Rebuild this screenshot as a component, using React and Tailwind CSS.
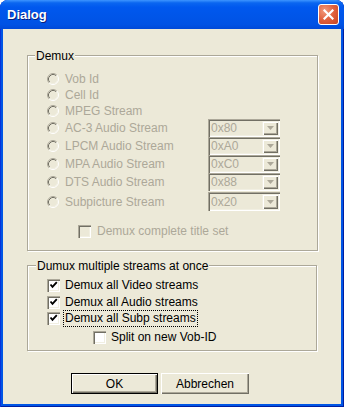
import React from "react";

function Radio() {
  return (
    <svg width="12" height="12" viewBox="0 0 12 12" className="shrink-0">
      <circle cx="6" cy="6" r="4.5" fill="#ece9d8" />
      <path d="M2.11 9.89 A5.5 5.5 0 0 1 9.89 2.11" fill="none" stroke="#aca899" />
      <path d="M9.89 2.11 A5.5 5.5 0 0 1 2.11 9.89" fill="none" stroke="#ffffff" />
      <path d="M2.82 9.18 A4.5 4.5 0 0 1 9.18 2.82" fill="none" stroke="#716f64" />
      <path d="M9.18 2.82 A4.5 4.5 0 0 1 2.82 9.18" fill="none" stroke="#f1efe2" />
    </svg>
  );
}

function Check({ checked, disabled }) {
  return (
    <div
      className={
        "w-[13px] h-[13px] shrink-0 shadow-[inset_1px_1px_0_#aca899,inset_2px_2px_0_#716f64,inset_-1px_-1px_0_#ffffff,inset_-2px_-2px_0_#f1efe2] " +
        (disabled ? "bg-[#ece9d8]" : "bg-white")
      }
    >
      {checked && (
        <svg width="13" height="13" viewBox="0 0 13 13">
          <path d="M3.5 5.5 L5.5 7.8 L9.8 3.2" fill="none" stroke="#000" strokeWidth="1.9" />
        </svg>
      )}
    </div>
  );
}

function Combo({ value, tall }) {
  return (
    <div
      className={
        "relative w-[72px] bg-[#ece9d8] shadow-[inset_1px_1px_0_#aca899,inset_2px_2px_0_#716f64,inset_-1px_-1px_0_#ffffff,inset_-2px_-2px_0_#f1efe2] flex items-center " +
        (tall ? "h-[19px]" : "h-[18px]")
      }
    >
      <span className="pl-[3px] text-[12px] leading-[14px] text-[#aca899]">{value}</span>
      <div className="absolute right-[2px] top-[2px] bottom-[2px] w-[16px] bg-[#ece9d8] shadow-[inset_1px_1px_0_#f1efe2,inset_2px_2px_0_#ffffff,inset_-1px_-1px_0_#716f64,inset_-2px_-2px_0_#aca899] flex items-center justify-center">
        <svg width="7" height="4" viewBox="0 0 7 4">
          <path d="M0 0 H7 L3.5 4 Z" fill="#aca899" />
        </svg>
      </div>
    </div>
  );
}

function RadioRow({ label, h, combo, tall, extra }) {
  return (
    <div className={"flex items-center " + h + " " + (extra || "")}>
      <div className="w-[161px] flex items-center gap-[6px]">
        <Radio />
        <span className="text-[12px] leading-[14px] text-[#aca899]">{label}</span>
      </div>
      {combo && <Combo value={combo} tall={tall} />}
    </div>
  );
}

export default function App() {
  return (
    <div className="w-[344px] h-[407px] flex flex-col bg-[#0055e5] rounded-t-[8px] overflow-hidden shadow-[inset_1px_0_0_#0831d9,inset_-1px_0_0_#001ea0,inset_0_-1px_0_#001ea0] font-['Liberation_Sans',Arial,sans-serif] select-none">
      <div className="h-[29px] shrink-0 flex items-center justify-between pl-[7px] pr-[5px] bg-[linear-gradient(to_bottom,#3d95ff_0%,#0a66f0_10%,#0058ee_25%,#0055e8_60%,#0052e4_85%,#0049d8_100%)]">
        <span className="text-white font-bold text-[13px] leading-[16px] [text-shadow:1px_1px_0_#0a1e7a]">Dialog</span>
        <div className="w-[21px] h-[21px] rounded-[3px] border border-white bg-[radial-gradient(circle_at_30%_30%,#f29a7c_0%,#e0603d_50%,#c74421_100%)] flex items-center justify-center">
          <svg width="11" height="11" viewBox="0 0 11 11">
            <path d="M1.5 1.5 L9.5 9.5 M9.5 1.5 L1.5 9.5" stroke="#fff" strokeWidth="2.2" strokeLinecap="square" />
          </svg>
        </div>
      </div>
      <div className="flex-1 mx-[3px] mb-[3px] bg-[#ece9d8] flex flex-col">
        <div className="relative mt-[26px] ml-[24px] w-[291px] h-[196px] border border-[#aca899] shadow-[inset_1px_1px_0_#ffffff,1px_1px_0_#ffffff] pt-[15px] pl-[19px] flex flex-col">
          <span className="absolute left-[7px] top-[-7px] px-[1px] bg-[#ece9d8] text-[12px] leading-[14px] text-black">Demux</span>
          <RadioRow label="Vob Id" h="h-[16px]" />
          <RadioRow label="Cell Id" h="h-[16px]" />
          <RadioRow label="MPEG Stream" h="h-[16px]" />
          <RadioRow label="AC-3 Audio Stream" h="h-[18px]" combo="0x80" />
          <RadioRow label="LPCM Audio Stream" h="h-[18px]" combo="0xA0" />
          <RadioRow label="MPA Audio Stream" h="h-[18px]" combo="0xC0" />
          <RadioRow label="DTS Audio Stream" h="h-[18px]" combo="0x88" />
          <RadioRow label="Subpicture Stream" h="h-[19px]" combo="0x20" tall extra="mt-[1px]" />
          <div className="mt-[13px] h-[14px] pl-[31px] flex items-center gap-[6px]">
            <Check disabled />
            <span className="text-[12px] leading-[14px] text-[#aca899]">Demux complete title set</span>
          </div>
        </div>

        <div className="relative mt-[14px] ml-[24px] w-[290px] h-[86px] border border-[#aca899] shadow-[inset_1px_1px_0_#ffffff,1px_1px_0_#ffffff] pt-[11px] pl-[19px] flex flex-col">
          <span className="absolute left-[8px] top-[-7px] px-[1px] bg-[#ece9d8] text-[12px] leading-[14px] text-black">Dumux multiple streams at once</span>
          <div className="h-[16px] flex items-center gap-[5px]">
            <Check checked />
            <span className="text-[12px] leading-[14px] text-black">Demux all Video streams</span>
          </div>
          <div className="mt-[1px] h-[16px] flex items-center gap-[5px]">
            <Check checked />
            <span className="text-[12px] leading-[14px] text-black">Demux all Audio streams</span>
          </div>
          <div className="h-[16px] flex items-center gap-[5px]">
            <Check checked />
            <span className="text-[12px] leading-[13px] text-black outline-1 outline-dotted outline-black outline-offset-[1px]">Demux all Subp streams</span>
          </div>
          <div className="mt-[3px] h-[16px] pl-[46px] flex items-center gap-[5px]">
            <Check />
            <span className="text-[12px] leading-[14px] text-black">Split on new Vob-ID</span>
          </div>
        </div>

        <div className="mt-[22px] pl-[68px] flex gap-[3px]">
          <div className="w-[87px] h-[21px] border border-black bg-[#ece9d8] shadow-[inset_1px_1px_0_#ffffff,inset_-1px_-1px_0_#716f64,inset_-2px_-2px_0_#aca899] flex items-center justify-center text-[12px] text-black">
            OK
          </div>
          <div className="w-[88px] h-[21px] bg-[#ece9d8] shadow-[inset_1px_1px_0_#ffffff,inset_-1px_-1px_0_#716f64,inset_-2px_-2px_0_#aca899] flex items-center justify-center text-[12px] text-black">
            Abbrechen
          </div>
        </div>
      </div>
    </div>
  );
}
